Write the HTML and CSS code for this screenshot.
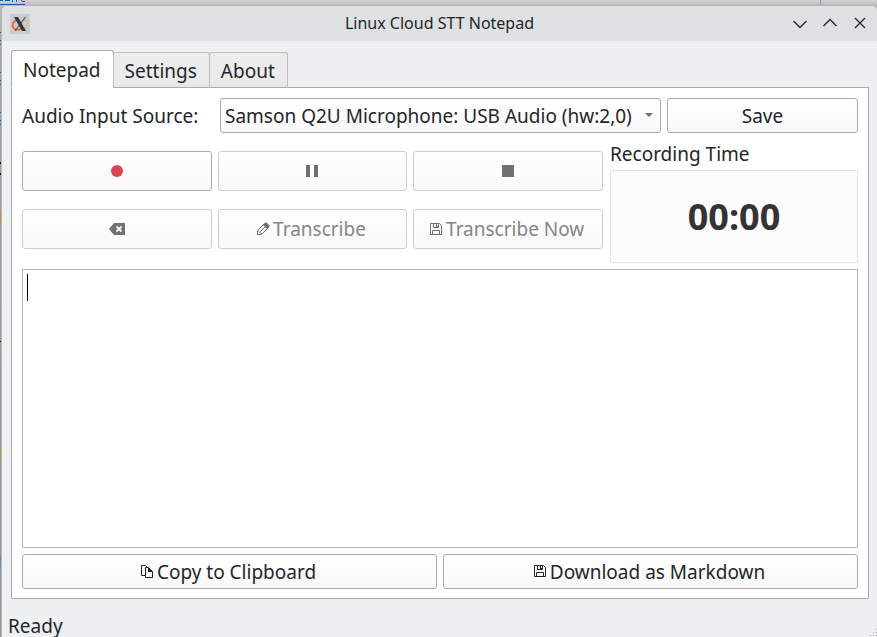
FILE: index.html
```
<!DOCTYPE html>
<html lang="en">
<head>
<meta charset="utf-8">
<title>Linux Cloud STT Notepad</title>
<link rel="stylesheet" href="styles.css">
</head>
<body>
<svg class="desktop" aria-hidden="true">
  <path d="M0 4.500H25" stroke="#1558b5"/>
  <path d="M0 0h3v1H0zM5 0h5v1H5zM12 0h1v2h-1zM16 0h1v2h-1zM20 0h2v2h3v-1" fill="#1558b5"/>
  <path d="M0 32h1v1H0zM0 40h1v1H0zM0 44h1v1H0zM0 72h1v1H0zM0 80h1v1H0zM0 84h1v1H0zM0 112h1v1H0zM0 120h1v1H0zM0 124h1v1H0z" fill="#1558b5"/>
  <path d="M0 162h1v2H0zM0 173h1v2H0zM0 341h1v1H0z" fill="#111"/>
  <path d="M0 211h1v12H0zM0 449h1v9H0z" fill="#b29355"/>
  <path d="M0 555h1v12H0z" fill="#5c93ad"/>
  <path d="M820.500 0v5" stroke="#8b9db2"/>
</svg>
<div class="window">
  <header class="titlebar">
    <svg class="app-icon" viewBox="0 0 20 20" aria-hidden="true">
      <rect width="20" height="20" rx="1" fill="#c4ced3"/>
      <path d="M8 6C2 7 1 13 5 15c2 1 4 1 6 0" fill="none" stroke="#ee6730" stroke-width="1.800"/>
      <path d="M11 6c6-1 8 3 6 6-1 2-3 3-6 3" fill="none" stroke="#e6b477" stroke-width="1.300"/>
      <path d="M15.500 3L5 17" stroke="#555" stroke-width="1.200"/>
      <path d="M4 3h4l8 14h-4z" fill="#30363a"/>
    </svg>
    <h1 class="title">Linux Cloud STT Notepad</h1>
    <div class="window-controls">
      <button class="wc" aria-label="Minimize"><svg viewBox="0 0 14 14"><path d="M.500 4L7 10.500 13.500 4"/></svg></button>
      <button class="wc" aria-label="Maximize"><svg viewBox="0 0 14 14"><path d="M.500 9L7 2.500 13.500 9"/></svg></button>
      <button class="wc" aria-label="Close"><svg viewBox="0 0 14 14"><path d="M2 1l10 10M12 1L2 11"/></svg></button>
    </div>
  </header>
  <nav class="tabs" role="tablist">
    <button class="tab active" role="tab" aria-selected="true">Notepad</button>
    <button class="tab" role="tab" aria-selected="false">Settings</button>
    <button class="tab" role="tab" aria-selected="false">About</button>
  </nav>
  <main class="panel">
    <div class="source-row">
      <label for="source">Audio Input Source:</label>
      <div class="combo">
        <select id="source"><option>Samson Q2U Microphone: USB Audio (hw:2,0)</option></select>
        <svg class="arrow" viewBox="0 0 8 4" aria-hidden="true"><path d="M0 0h8L4 4z"/></svg>
      </div>
      <button class="btn">Save</button>
    </div>
    <div class="recorder">
      <div class="controls">
        <button class="btn tall" aria-label="Record"><svg class="icon" viewBox="0 0 16 16"><circle cx="8" cy="8" r="6" fill="#da4453"/></svg></button>
        <button class="btn tall" disabled aria-label="Pause"><svg class="icon" viewBox="0 0 16 16"><path fill="currentColor" d="M2 2h4v12H2zM10 2h4v12h-4z"/></svg></button>
        <button class="btn tall" disabled aria-label="Stop"><svg class="icon" viewBox="0 0 16 16"><path fill="currentColor" d="M2 2h12v12H2z"/></svg></button>
        <button class="btn tall" disabled aria-label="Clear"><svg class="icon" viewBox="0 0 16 16"><path fill="currentColor" d="M0 8l5-6h11v12H5z"/><path d="M7.500 5.500l5 5M12.500 5.500l-5 5" stroke="#fcfcfc" stroke-width="1.800"/></svg></button>
        <button class="btn tall labelled" disabled><svg class="icon" viewBox="0 0 16 16"><g fill="none" stroke="currentColor"><path d="M2.500 13.500v-4l7-7 4 4-7 7z"/><path d="M3 9.500l3.500 3.500M5.500 10.500l5-5"/></g><path fill="currentColor" d="M8 4l2.500-2.500h1l3 3v1L12 8zM2 11.500V14h2.500z"/></svg>Transcribe</button>
        <button class="btn tall labelled" disabled><svg class="icon" viewBox="0 0 16 16"><path fill="none" stroke="currentColor" d="M2.500 2.500h9l2 2v9h-11zM4.500 13.500v-4h7v4M5.500 2.500v4h5v-4"/><path fill="currentColor" d="M8 2h3v4H8z"/><path fill="#fcfcfc" d="M9 3h1v2H9z"/></svg>Transcribe Now</button>
      </div>
      <section class="timer">
        <h2 class="timer-label">Recording Time</h2>
        <output class="clock">00:00</output>
      </section>
    </div>
    <div class="editor">
      <textarea aria-label="Transcription"></textarea>
      <span class="caret"></span>
    </div>
    <div class="actions">
      <button class="btn labelled"><svg class="icon" viewBox="0 0 16 16"><path fill="none" stroke="currentColor" d="M6 11.500H2.500v-10h4l2 2M6.500 3.500h3l4 4v6h-7z"/><path fill="currentColor" d="M9 3l5 5H9z"/></svg>Copy to Clipboard</button>
      <button class="btn labelled"><svg class="icon" viewBox="0 0 16 16"><path fill="none" stroke="currentColor" d="M2.500 1.500h9l2 2v9h-11zM4.500 12.500v-4h7v4M5.500 1.500v4h5v-4"/><path fill="currentColor" d="M8 1h3v4H8z"/><path fill="#fcfcfc" d="M9 2h1v2H9z"/></svg>Download as Markdown</button>
    </div>
  </main>
  <footer class="status">
    <span>Ready</span>
    <svg class="grip" viewBox="0 0 8 8" aria-hidden="true"><path fill="#a8aaac" d="M7 0h1v1H7zM4 3h1v1H4zM7 3h1v1H7zM1 6h1v1H1zM4 6h1v1H4zM7 6h1v1H7z"/></svg>
  </footer>
</div>
</body>
</html>
```
FILE: styles.css
```
* { box-sizing: border-box; }

body {
  margin: 0;
  height: 100vh;
  padding: 5px 0 0 1px;
  overflow: hidden;
  background: linear-gradient(#d2d2d2, #b8b8b8 6px, #a0a0a2 60px, #949497);
  color: #232629;
  font: 19px/28px "Noto Sans", sans-serif;
}

button, select, textarea {
  margin: 0;
  font: inherit;
  color: inherit;
}

.desktop {
  position: absolute;
  top: 0;
  left: 0;
  width: 100%;
  height: 100%;
}

.window {
  position: relative;
  display: flex;
  flex-direction: column;
  height: 100%;
  border: solid #b7b8ba;
  border-width: 1px 0 0 1px;
  border-radius: 6px 6px 0 0;
  background: #eff0f1;
  overflow: hidden;
}

.titlebar {
  display: grid;
  grid-template-columns: 1fr auto 1fr;
  align-items: center;
  flex: none;
  height: 35px;
  padding: 0 10px 0 8px;
  background: #dee0e2;
}

.app-icon { width: 20px; height: 20px; }

.title {
  margin: 0;
  padding: 0 0 2px 2px;
  font-size: 16px;
  line-height: 24px;
  font-weight: 400;
}

.window-controls {
  display: flex;
  justify-content: flex-end;
  gap: 16px;
}

.wc {
  display: flex;
  padding: 0;
  border: 0;
  background: none;
}

.wc svg {
  width: 14px;
  height: 14px;
  fill: none;
  stroke: #232629;
  stroke-width: 1.3;
}

.tabs {
  position: relative;
  z-index: 1;
  display: flex;
  align-items: flex-end;
  flex: none;
  height: 47px;
  margin: 0 9px -1px;
}

.tab {
  height: 36px;
  margin-left: -1px;
  padding: 1px 12px 0 11px;
  border: 1px solid #bcbebf;
  border-bottom-color: #a9abac;
  border-radius: 3px 3px 0 0;
  background: linear-gradient(#ececec 70%, #e6e6e6);
}

.tab.active {
  height: 38px;
  margin-left: 0;
  border-color: #a9abac;
  border-bottom-color: #fff;
  background: #fff;
}

.panel {
  display: flex;
  flex-direction: column;
  flex: 1;
  min-height: 0;
  margin: 0 8px 0 9px;
  padding: 10px 10px 9px;
  border: 1px solid #a9abac;
  background: #fff;
}

.source-row {
  display: grid;
  grid-template-columns: 192px 441fr 191fr;
  align-items: center;
  gap: 6px;
}

.btn {
  display: flex;
  align-items: center;
  justify-content: center;
  gap: 2px;
  height: 35px;
  min-width: 0;
  padding: 0 4px;
  border: 1px solid #a9abac;
  border-radius: 3px;
  background: linear-gradient(#fefefe, #f9f9f9);
  white-space: nowrap;
}

.btn:disabled {
  border-color: #cdcecf;
  color: #858687;
}

.labelled { padding-right: 8px; }

.tall { height: 40px; }

.icon {
  flex: none;
  width: 16px;
  height: 16px;
}

.btn:disabled .icon { color: #707172; }

.combo { position: relative; }

.combo select {
  display: block;
  width: 100%;
  height: 35px;
  padding: 0 24px 0 4px;
  border: 1px solid #a9abac;
  border-radius: 3px;
  background: linear-gradient(#fefefe, #f9f9f9);
  appearance: none;
}

.arrow {
  position: absolute;
  top: 15px;
  right: 8px;
  width: 8px;
  height: 4px;
  fill: #6c6e70;
  pointer-events: none;
}

.recorder {
  display: grid;
  grid-template-columns: 581fr 248fr;
  gap: 7px;
  height: 123px;
  margin: 7px 0 6px;
}

.controls {
  display: grid;
  grid-template-columns: repeat(3, 1fr);
  align-content: start;
  gap: 18px 6px;
  padding-top: 11px;
}

.timer {
  display: flex;
  flex-direction: column;
}

.timer-label {
  margin: 0 0 2px;
  font-size: 19px;
  font-weight: 400;
}

.clock {
  display: flex;
  flex: 1;
  align-items: center;
  justify-content: center;
  border: 1px solid #e2e3e3;
  border-radius: 2px;
  background: #fcfcfc;
  color: #333;
  font-size: 36px;
  font-weight: 700;
}

.editor {
  position: relative;
  flex: 1;
  min-height: 0;
}

.editor textarea {
  display: block;
  width: 100%;
  height: 100%;
  padding: 4px;
  border: 1px solid #b5b7b8;
  border-radius: 0;
  outline: 0;
  background: #fff;
  resize: none;
}

.caret {
  position: absolute;
  top: 5px;
  left: 5px;
  width: 1px;
  height: 27px;
  background: #000;
}

.actions {
  display: grid;
  grid-template-columns: 1fr 1fr;
  gap: 6px;
  margin-top: 6px;
}

.status {
  display: flex;
  align-items: flex-end;
  justify-content: space-between;
  flex: none;
  height: 38px;
  padding-left: 6px;
}

.status span { height: 25px; }

.grip { width: 8px; height: 8px; }
```
